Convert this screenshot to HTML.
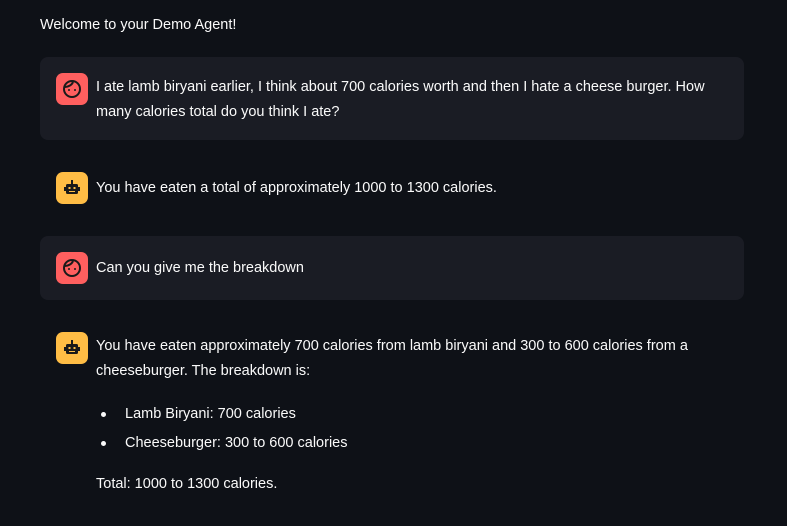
<!DOCTYPE html>
<html><head><style>
body{margin:0;background:#0e1117;width:787px;height:526px;overflow:hidden;font-family:"Liberation Sans",sans-serif;color:#fafafa;font-size:14.5px}
.t{position:absolute;left:40px;top:17px}
.m{position:absolute;left:40px;width:704px;border-radius:8px;box-sizing:border-box}
.bg{background:#1a1c24}
.av{position:absolute;left:16px;width:32px;height:32px;border-radius:7px}
.r{background:#ff5f5f}.y{background:#ffbd45}
.tx{position:absolute;left:56px;right:16px;line-height:25px}
p{margin:0}
ul{margin:16px 0 0 0;padding-left:29px;line-height:29px;list-style:none}
li{position:relative}
li:before{content:"";position:absolute;left:-24px;top:12px;width:5px;height:5px;border-radius:50%;background:#fafafa}
</style></head><body>
<div class="t">Welcome to your Demo Agent!</div>
<div class="m bg" style="top:57px;height:83px">
<div class="av r" style="top:16px"><svg width="32" height="32"><circle cx="16" cy="16" r="8" fill="none" stroke="#1a1a1a" stroke-width="2"/><path d="M9 14c3 0 7-2 8-5" fill="none" stroke="#1a1a1a" stroke-width="2"/><circle cx="13" cy="17" r="1" fill="#1a1a1a"/><circle cx="19" cy="17" r="1" fill="#1a1a1a"/></svg></div>
<div class="tx" style="top:18px">I ate lamb biryani earlier, I think about 700 calories worth and then I hate a cheese burger. How many calories total do you think I ate?</div>
</div>
<div class="m" style="top:160px;height:56px">
<div class="av y" style="top:12px"><svg width="32" height="32"><rect x="10" y="12" width="12" height="10" rx="1.5" fill="#1a1a1a"/><rect x="8" y="15" width="2" height="4" fill="#1a1a1a"/><rect x="22" y="15" width="2" height="4" fill="#1a1a1a"/><rect x="15" y="8" width="2" height="4" fill="#1a1a1a"/><rect x="12.5" y="15" width="2" height="2" fill="#ffbd45"/><rect x="17.5" y="15" width="2" height="2" fill="#ffbd45"/><rect x="13" y="19" width="6" height="1" fill="#ffbd45"/></svg></div>
<div class="tx" style="top:16px">You have eaten a total of approximately 1000 to 1300 calories.</div>
</div>
<div class="m bg" style="top:236px;height:64px">
<div class="av r" style="top:16px"><svg width="32" height="32"><circle cx="16" cy="16" r="8" fill="none" stroke="#1a1a1a" stroke-width="2"/><path d="M9 14c3 0 7-2 8-5" fill="none" stroke="#1a1a1a" stroke-width="2"/><circle cx="13" cy="17" r="1" fill="#1a1a1a"/><circle cx="19" cy="17" r="1" fill="#1a1a1a"/></svg></div>
<div class="tx" style="top:20px">Can you give me the breakdown</div>
</div>
<div class="m" style="top:316px;height:200px">
<div class="av y" style="top:16px"><svg width="32" height="32"><rect x="10" y="12" width="12" height="10" rx="1.5" fill="#1a1a1a"/><rect x="8" y="15" width="2" height="4" fill="#1a1a1a"/><rect x="22" y="15" width="2" height="4" fill="#1a1a1a"/><rect x="15" y="8" width="2" height="4" fill="#1a1a1a"/><rect x="12.5" y="15" width="2" height="2" fill="#ffbd45"/><rect x="17.5" y="15" width="2" height="2" fill="#ffbd45"/><rect x="13" y="19" width="6" height="1" fill="#ffbd45"/></svg></div>
<div class="tx" style="top:18px">
<p>You have eaten approximately 700 calories from lamb biryani and 300 to 600 calories from a cheeseburger. The breakdown is:</p>
<ul><li>Lamb Biryani: 700 calories</li><li>Cheeseburger: 300 to 600 calories</li></ul>
<p style="margin-top:14px">Total: 1000 to 1300 calories.</p>
</div>
</div>
</body></html>
